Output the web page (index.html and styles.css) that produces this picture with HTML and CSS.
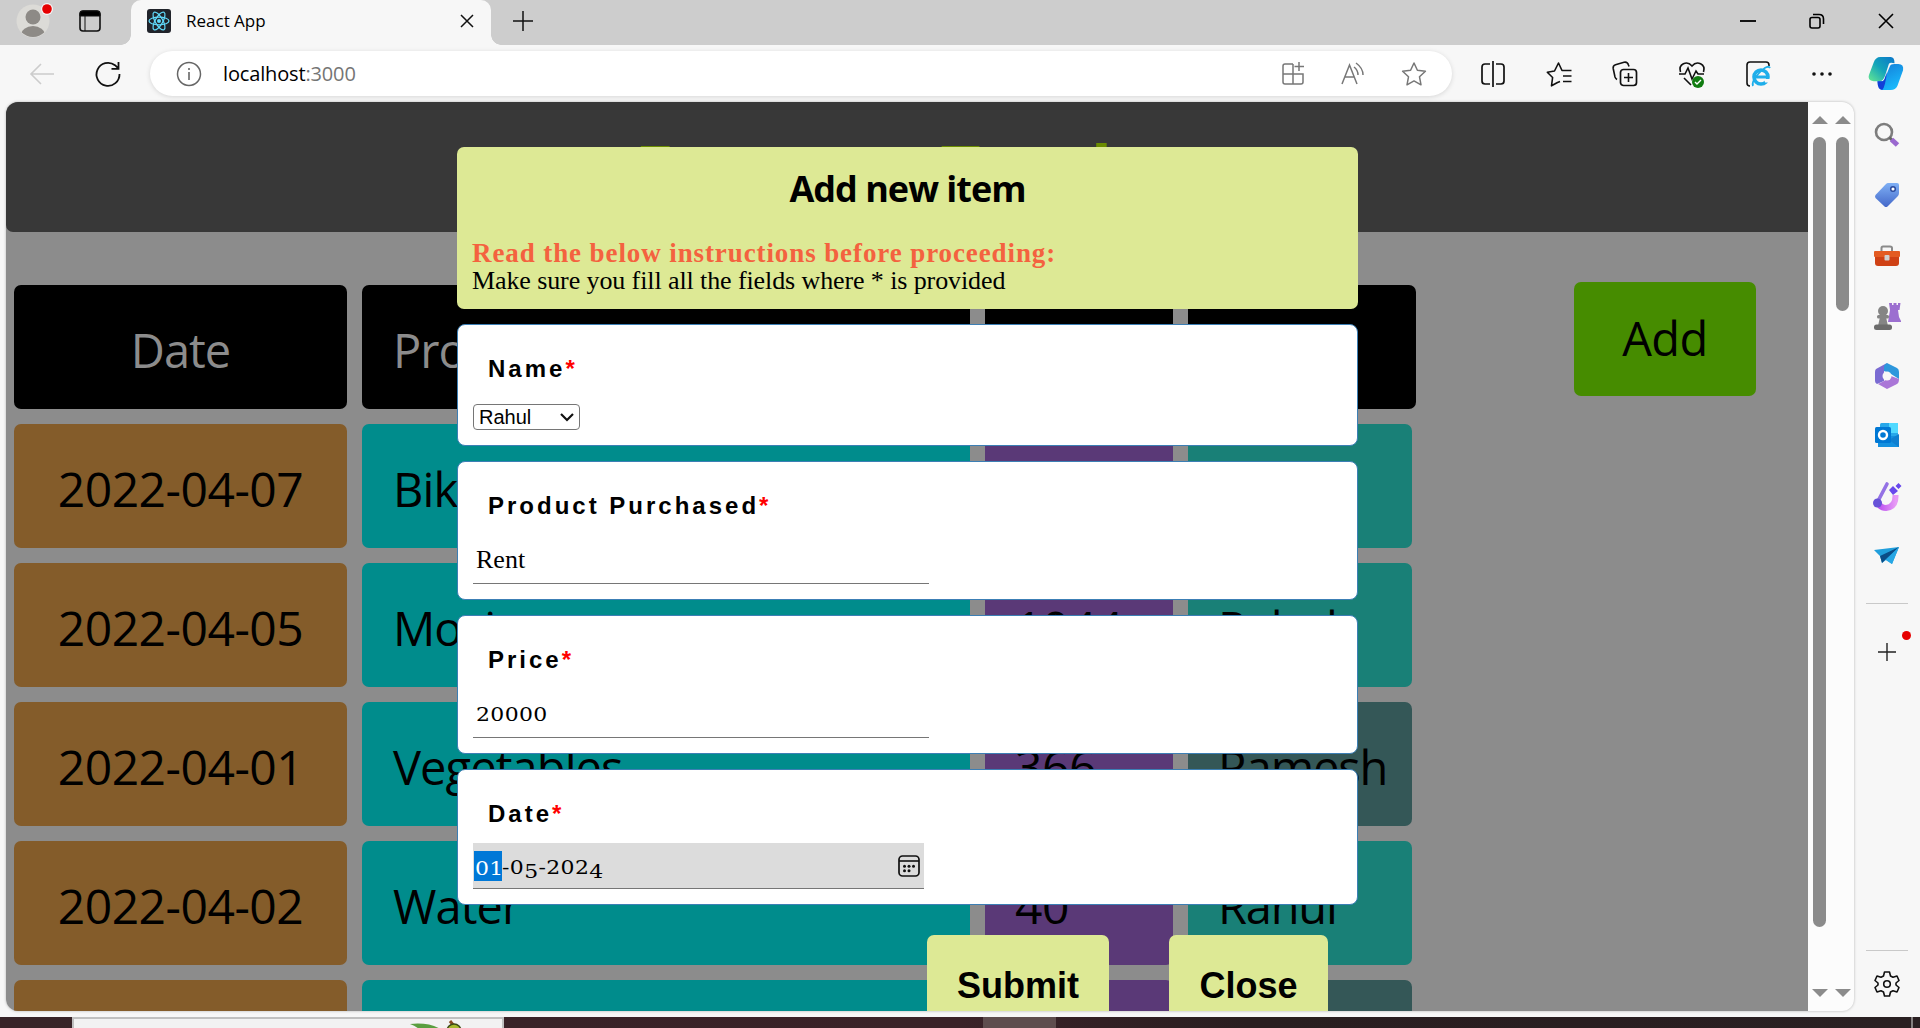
FILE: index.html
```html
<!DOCTYPE html>
<html lang="en">
<head>
<meta charset="utf-8">
<title>React App</title>
<link rel="stylesheet" href="styles.css">
</head>
<body>
<div class="window">
  <div class="tabstrip">
    <svg class="avatar" width="42" height="45" viewBox="0 0 42 45"><defs><clipPath id="av"><circle cx="17" cy="21" r="16"/></clipPath></defs><circle cx="17" cy="21" r="16.5" fill="#dcdbd7"/><g fill="#8d8a86" clip-path="url(#av)"><circle cx="17" cy="17" r="7.5"/><ellipse cx="17" cy="35" rx="12" ry="9"/></g><circle cx="31" cy="9" r="6" fill="#f7f7f7"/><circle cx="31" cy="9" r="4.8" fill="#e60000"/></svg>
    <svg class="tabsicon" width="22" height="22" viewBox="0 0 22 22"><rect x="1" y="1" width="20" height="20" rx="3" fill="none" stroke="#111" stroke-width="1.6"/><path d="M1 6V3.500Q1 1 4 1H18Q21 1 21 4V6ZM6 6V21" stroke="#111"/></svg>
    <div class="tab">
      <svg width="24" height="24" viewBox="0 0 24 24"><rect width="24" height="24" rx="3" fill="#20232a"/><g fill="none" stroke="#61dafb" stroke-width="1.2"><ellipse cx="12" cy="12" rx="10" ry="3.800"/><ellipse cx="12" cy="12" rx="10" ry="3.800" transform="rotate(60 12 12)"/><ellipse cx="12" cy="12" rx="10" ry="3.800" transform="rotate(120 12 12)"/></g><circle cx="12" cy="12" r="2" fill="#61dafb"/></svg>
      <span class="tabtitle">React App</span>
      <svg class="tabclose" width="14" height="14" viewBox="0 0 14 14"><path d="M1 1 13 13M13 1 1 13" stroke="#111" stroke-width="1.5"/></svg>
    </div>
    <svg class="newtab" width="22" height="22" viewBox="0 0 22 22"><path d="M11 1V21M1 11H21" stroke="#111" stroke-width="1.5"/></svg>
    <div class="controls">
      <svg width="16" height="16" viewBox="0 0 16 16"><path d="M0 8H16" stroke="#000" stroke-width="1.800"/></svg>
      <svg width="16" height="16" viewBox="0 0 16 16"><g fill="none" stroke="#000" stroke-width="1.600"><rect x="1" y="4.500" width="10" height="10.500" rx="2"/><path d="M4 1.500H10Q14.500 1.500 14.500 6V11"/></g></svg>
      <svg width="16" height="16" viewBox="0 0 16 16"><path d="M1 1 15 15M15 1 1 15" stroke="#000" stroke-width="1.600"/></svg>
    </div>
  </div>
  <div class="toolbar">
    <svg class="back" width="26" height="24" viewBox="0 0 26 24"><path d="M25 12H2M12 2 2 12 12 22" fill="none" stroke="#ccc" stroke-width="1.600"/></svg>
    <svg class="reload" width="26" height="26" viewBox="0 0 26 26"><path d="M24.500 13A11.500 11.500 0 1 1 20 4.200L23.500 7.500M23.500 1V7.800H16.500" fill="none" stroke="#111" stroke-width="1.800"/></svg>
    <div class="address">
      <svg width="26" height="26" viewBox="0 0 26 26"><circle cx="13" cy="13" r="11.500" fill="none" stroke="#666" stroke-width="1.500"/><path d="M13 11V19M13 7V9" stroke="#666" stroke-width="1.600"/></svg>
      <span class="url">localhost<span class="port">:3000</span></span>
      <div class="addressicons">
        <svg width="24" height="24" viewBox="0 0 24 24"><path d="M12 2H4Q2 2 2 4V20Q2 22 4 22H20Q22 22 22 20V12H2M12 2V22M18 0V9M13.500 4.500H23" fill="none" stroke="#777" stroke-width="1.500"/></svg>
        <svg width="24" height="24" viewBox="0 0 24 24"><path d="M1 22 8.500 3 16 22M4 15H13M13 5Q17 8 17 13M15 1Q22 6 22 13" fill="none" stroke="#777" stroke-width="1.500"/></svg>
        <svg width="26" height="26" viewBox="0 0 26 26"><path d="m13 2 3.400 7.300 8 1-5.900 5.500 1.500 8L13 19.900 6 23.800l1.500-8L1.600 10.300l8-1Z" fill="none" stroke="#777" stroke-width="1.500" stroke-linejoin="round"/></svg>
      </div>
    </div>
    <div class="actions">
      <svg width="26" height="26" viewBox="0 0 26 26"><path d="M10 3H5Q2 3 2 6V20Q2 23 5 23H10M16 3H21Q24 3 24 6V20Q24 23 21 23H16M13 0V26" fill="none" stroke="#111" stroke-width="1.700"/></svg>
      <svg width="26" height="26" viewBox="0 0 26 26"><path d="M14 20.500 11.500 21.500 5.500 24.800 6.600 16.500 1.300 11.200 8.500 10 12.500 2 16 9.500H25.500M17 15H25.500M17 20.500H25.500" fill="none" stroke="#111" stroke-width="1.600" stroke-linejoin="round"/></svg>
      <svg width="26" height="26" viewBox="0 0 26 26"><path d="M5 18.500Q3.500 17.500 3 16L1.200 7.500Q.700 4.500 3.500 3.700L12 1.200Q15.500 .500 16.500 4L17 5.500" fill="none" stroke="#111" stroke-width="1.600"/><rect x="8.500" y="8.500" width="16" height="16" rx="3" fill="none" stroke="#111" stroke-width="1.700"/><path d="M16.500 12V21M12 16.500H21" stroke="#111" stroke-width="1.600"/></svg>
      <svg width="28" height="28" viewBox="0 0 28 28"><path d="M2.500 12C0 4 9 0 14 6C19 0 28 4 25.500 12M6 18 13 25M1 14H7L10 8 14 19 18 11 20 14H26" fill="none" stroke="#111" stroke-width="1.600"/><circle cx="20" cy="22" r="6" fill="#107c10"/><path d="m17 22 2 2 4-4" fill="none" stroke="#fff" stroke-width="1.400"/></svg>
      <svg width="26" height="26" viewBox="0 0 26 26"><path d="M4 25Q1 25 1 22V4Q1 1 4 1H20Q23 1 23 4V5" fill="none" stroke="#111" stroke-width="1.600"/><circle cx="15" cy="16" r="7" fill="none" stroke="#1eaeea" stroke-width="3.600"/><path d="M8 16H22" stroke="#1eaeea" stroke-width="3"/><path d="M18 18H25V21.500H19Z" fill="#f7f7f7"/><path d="M7 25Q5 21 13 12 22 3 24 7" fill="none" stroke="#1eaeea" stroke-width="1.800"/></svg>
      <svg width="20" height="26" viewBox="0 0 20 26"><g fill="#111"><circle cx="2" cy="13" r="1.800"/><circle cx="10" cy="13" r="1.800"/><circle cx="18" cy="13" r="1.800"/></g></svg>
    </div>
    <svg class="copilot" width="36" height="33" viewBox="0 0 38 42" preserveAspectRatio="none"><defs><linearGradient id="c1" x1="1" y1="0" x2="0" y2="1"><stop stop-color="#0b75cb"/><stop offset=".5" stop-color="#12a4ba"/><stop offset="1" stop-color="#67e991"/></linearGradient><linearGradient id="c2" x2=".5" y2="1"><stop stop-color="#147ad6"/><stop offset="1" stop-color="#19b8fb"/></linearGradient></defs><path d="M24 0H13Q8 0 6 7L1 23Q-1 30 6 31H12Q16 31 18 24L22 9Q23 6 28 8 28 0 24 0Z" fill="url(#c1)"/><path d="M10 31H14Q17 31 18.500 25L23 12Q24 9 28 9H32Q38 9 37 17L31 37Q29 42 24 42H15Q11 42 10 31Z" fill="url(#c2)"/><path d="m10 31 4 0q3 0 4-5l2-7q-2 20-5 23-5 0-5-11" fill="#123fd7"/></svg>
  </div>
  <div class="main">
    <div class="viewport">
      <div class="page">
        <div class="banner"><h1 class="brand">Expense Tracker</h1></div>
        <div class="content">
          <div class="table">
            <div class="row head"><div class="cell c-date">Date</div><div class="cell c-prod">Product</div><div class="cell c-price">Price</div><div class="cell c-name">Name</div></div>
            <div class="row"><div class="cell c-date">2022-04-07</div><div class="cell c-prod">Bike</div><div class="cell c-price"></div><div class="cell c-name"></div></div>
            <div class="row"><div class="cell c-date">2022-04-05</div><div class="cell c-prod">Movies</div><div class="cell c-price">1044</div><div class="cell c-name">Rahul</div></div>
            <div class="row"><div class="cell c-date">2022-04-01</div><div class="cell c-prod">Vegetables</div><div class="cell c-price">366</div><div class="cell c-name alt">Ramesh</div></div>
            <div class="row"><div class="cell c-date">2022-04-02</div><div class="cell c-prod">Water</div><div class="cell c-price">40</div><div class="cell c-name">Rahul</div></div>
            <div class="row"><div class="cell c-date"></div><div class="cell c-prod"></div><div class="cell c-price"></div><div class="cell c-name alt"></div></div>
          </div>
          <div class="add">Add</div>
        </div>
        <div class="modal">
          <div class="intro">
            <h2 class="title">Add new item</h2>
            <div class="warn">Read the below instructions before proceeding:</div>
            <div class="note">Make sure you fill all the fields where * is provided</div>
          </div>
          <div class="card namecard"><div class="label">Name<span class="star">*</span></div>
            <div class="select"><span>Rahul</span><svg width="14" height="9" viewBox="0 0 14 9"><path d="m1 1 6 6 6-6" fill="none" stroke="#111" stroke-width="2.200"/></svg></div></div>
          <div class="card"><div class="label">Product Purchased<span class="star">*</span></div><div class="input">Rent</div></div>
          <div class="card"><div class="label">Price<span class="star">*</span></div><div class="input num"><span class="wide">20000</span></div></div>
          <div class="card datecard"><div class="label">Date<span class="star">*</span></div>
            <div class="input num dateinput"><span class="sel"><span class="wide">01</span></span><span class="wide rest">-0<span class="low">5</span>-202<span class="low">4</span></span><svg class="cal" width="22" height="22" viewBox="0 0 22 22"><rect x="1" y="1" width="20" height="20" rx="3.500" fill="none" stroke="#111" stroke-width="1.700"/><path d="M1 6H21" stroke="#111" stroke-width="1.600"/><g fill="#111"><circle cx="6.500" cy="11.200" r="1.500"/><circle cx="11" cy="11.200" r="1.500"/><circle cx="15.500" cy="11.200" r="1.500"/><circle cx="6.500" cy="15.800" r="1.500"/><circle cx="11" cy="15.800" r="1.500"/></g></svg></div></div>
          <div class="buttons"><div class="btn submit">Submit</div><div class="btn close">Close</div></div>
        </div>
      </div>
      <div class="scroll"><i class="up"></i><b class="thumb long"></b><i class="down"></i></div>
      <div class="scroll"><i class="up"></i><b class="thumb"></b><i class="down"></i></div>
    </div>
    <div class="sidebar">
      <svg width="28" height="28" viewBox="0 0 28 28"><circle cx="11" cy="11" r="8" fill="none" stroke="#7d7d7d" stroke-width="2.600"/><path d="m16.500 16.500 3 3" stroke="#666" stroke-width="3"/><path d="m18.500 18.500 6 5.500" stroke="#9a68cf" stroke-width="5"/></svg>
      <svg width="28" height="28" viewBox="0 0 28 28"><defs><linearGradient id="tg" x2="0" y2="1"><stop stop-color="#7fb0f5"/><stop offset="1" stop-color="#4468c9"/></linearGradient></defs><path d="M15 2H24Q26 2 26 4V12Q26 14 24.500 15.500L14.500 25.500Q13 26.500 11.500 25.500L2.500 17Q1.500 15.500 2.500 14L13 3Q14 2 15 2Z" fill="url(#tg)"/><circle cx="20" cy="8" r="2.300" fill="#fff" stroke="#2b4a9c" stroke-width="1.500"/></svg>
      <svg width="28" height="28" viewBox="0 0 28 28"><path d="M8.500 9V6Q8.500 4.500 10 4.500H17Q19 4.500 19 6V9" fill="none" stroke="#8a8a8a" stroke-width="2"/><path d="M2 13H26V21Q26 24 23 24H5Q2 24 2 21Z" fill="#cf4115"/><rect x="1" y="9" width="26" height="6" rx="1" fill="#e35b22"/><rect x="11.500" y="13" width="5" height="5.500" rx="1" fill="#d0d0d0"/></svg>
      <svg width="28" height="28" viewBox="0 0 28 28"><path d="M16 1H19V3H20.500V1H23.500V3H25V1H27.500L26.500 8H25L26 15 28 19V20H15L17 8Z" fill="#9c6fd0"/><g fill="#858585"><circle cx="10" cy="9" r="5"/><rect x="4" y="13" width="12" height="3.500" rx="1.500"/><path d="M7 15H13L15 24H5Z"/><rect x="1" y="22.500" width="18" height="5.500" rx="2.500" fill="#6c6c6c"/></g></svg>
      <svg width="28" height="28" viewBox="0 0 28 28"><path d="M14 1 3 7Q2 8 2 10V19Q2 21 4 22L11 19V6Z" fill="#7a6bd2"/><path d="M14 1 24 6Q26 7 26 10V17L18 12 11 9V4Q12 2 14 1Z" fill="#2d97dc"/><path d="M26 17Q26 21 24 22L14 27 5 22 11 19 18 14Z" fill="#aa76d7"/><circle cx="14" cy="14" r="4.500" fill="#f7f7f7"/></svg>
      <svg width="28" height="28" viewBox="0 0 28 28"><rect x="7" y="1" width="18" height="17" rx="1.500" fill="#28a8ea"/><path d="M16 1H25V11H16Z" fill="#50d9ff"/><path d="M5 14H26V25H5Z" fill="#1490df"/><path d="M26 12V25L16 18Z" fill="#0f7fd0"/><rect x="2" y="5" width="16" height="16" rx="1.500" fill="#0078d4"/><circle cx="10" cy="13" r="4" fill="none" stroke="#fff" stroke-width="2.400"/></svg>
      <svg class="magic" width="28" height="28" viewBox="0 0 28 28"><defs><linearGradient id="mg" x2="1"><stop stop-color="#b94df0"/><stop offset="1" stop-color="#e79af5"/></linearGradient></defs><path d="M5 19Q7 25 13 25 23 24 22.500 12" fill="none" stroke="url(#mg)" stroke-width="6"/><path d="M14 1 5 18" stroke="#9472e5" stroke-width="3.600" stroke-linecap="round"/><circle cx="4.500" cy="20" r="4.500" fill="#6752d8"/><path d="m20 3 5 5-5 4-4-5ZM25.500 0l3 3-3 3-3-3Z" fill="#6848ec"/></svg>
      <svg width="28" height="28" viewBox="0 0 28 28"><path d="M1 7 26 4 19 21 13 17 9 20 7 13Z" fill="#219fdc"/><path d="M26 4 7 13 9 20 13 16Z" fill="#0b4c86"/><path d="m26 4-13 13 6 4Z" fill="#27a7e5"/></svg>
      <div class="rule"></div>
      <div class="plus"><svg width="20" height="20" viewBox="0 0 20 20"><path d="M10 1V19M1 10H19" stroke="#222" stroke-width="1.400"/></svg><i class="dot"></i></div>
      <div class="rule bottom"></div>
      <svg class="gear" width="26" height="28" viewBox="0 0 26 28"><path d="M10.500 2H15.500L16.500 6 19 7.300 23 6 25 10.500 22 13V15L25 17.500 23 22 19 20.700 16.500 22 15.500 26H10.500L9.500 22 7 20.700 3 22 1 17.500 4 15V13L1 10.500 3 6 7 7.300 9.500 6Z" fill="none" stroke="#111" stroke-width="1.600" stroke-linejoin="round"/><circle cx="13" cy="14" r="3.300" fill="none" stroke="#111" stroke-width="1.600"/></svg>
    </div>
  </div>
  <div class="taskbar">
    <div class="search"><svg width="60" height="11" viewBox="0 0 60 11"><path d="M4 5Q24 3 36 11H14Q10 7 4 5Z" fill="#5a9e3f"/><path d="M44 2 48 7" stroke="#8a4b22" stroke-width="3"/><circle cx="48" cy="12" r="7" fill="#a7b82c" stroke="#3c4a16" stroke-width="1.500"/></svg></div>
    <div class="active"></div>
    <div class="clock">10:35 AM</div>
    <div class="peek"></div>
  </div>
</div>
</body>
</html>
```
FILE: styles.css
```css
* { box-sizing: border-box; }
body { margin: 0; font-family: "Open Sans", "Noto Sans", sans-serif; color: #000; }
svg { display: block; flex: none; overflow: visible; }
.window { width: 1920px; height: 1028px; overflow: hidden; background: #f7f7f7; display: flex; flex-direction: column; }
.tabstrip { height: 45px; background: #cdcdcd; display: flex; align-items: center; flex: none; padding-left: 16px; }
.tabsicon { margin: 0 0 3px 21px; }
.tab { margin-left: 30px; width: 360px; height: 45px; background: #f7f7f7; border-radius: 10px 10px 0 0; display: flex; align-items: center; padding: 0 17px 3px 16px; position: relative; }
.tab::before, .tab::after { content: ""; position: absolute; bottom: 0; width: 10px; height: 10px; }
.tab::before { left: -10px; background: radial-gradient(circle at 0 0, #cdcdcd 9.5px, #f7f7f7 10px); }
.tab::after { right: -10px; background: radial-gradient(circle at 100% 0, #cdcdcd 9.5px, #f7f7f7 10px); }
.tabtitle { margin: -2px 0 0 15px; font-size: 17px; }
.tabclose { margin-left: auto; }
.newtab { margin-left: 21px; margin-bottom: 4px; }
.controls { margin-left: auto; display: flex; gap: 53px; margin-right: 26px; margin-bottom: 4px; }
.toolbar { height: 57px; flex: none; display: flex; align-items: center; padding-left: 29px; }
.reload { margin-left: 40px; }
.address { margin-left: 29px; width: 1302px; height: 45px; border-radius: 23px; background: #fff; box-shadow: 0 1px 5px #0002; display: flex; align-items: center; padding: 0 25px 0 26px; }
.url { margin-left: 21px; font-size: 20px; letter-spacing: -.15px; }
.port { color: #757575; }
.addressicons { margin-left: auto; display: flex; align-items: center; gap: 36px; }
.actions { margin-left: 28px; display: flex; align-items: center; gap: 40px; }
.copilot { margin-left: 36px; }
.main { height: 915px; flex: none; display: flex; padding-left: 6px; }
.viewport { width: 1848px; height: 909px; display: flex; border-radius: 12px; overflow: hidden; background: #fcfcfc; box-shadow: 0 0 3px #0004; flex: none; }
.page { width: 1802px; height: 909px; overflow: hidden; background: #8c8c8c; position: relative; flex: none; }
.banner { height: 130px; background: #383838; border-radius: 0 0 0 7px; padding: 32px 0 0 28px; }
.brand { margin: 0; text-align: center; font-size: 70px; line-height: 70px; font-weight: 700; color: #6b8c00; }
.content { display: flex; padding: 53px 0 0 8px; align-items: flex-start; }
.table { display: flex; flex-direction: column; gap: 15px; width: 1402px; }
.row { display: flex; gap: 15px; height: 124px; }
.cell { border-radius: 7px; font-size: 48px; line-height: 130px; padding-left: 31px; white-space: nowrap; letter-spacing: -.5px; height: 124px; }
.c-date { width: 333px; background: #845c2a; padding: 0; text-align: center; }
.c-prod { width: 608px; background: #008c8c; font-size: 47px; letter-spacing: -.9px; }
.c-price { width: 188px; background: #5a3977; padding-left: 30px; }
.c-name { width: 224px; background: #198077; font-size: 47px; letter-spacing: -1.2px; padding-left: 30px; }
.c-name.alt { background: #345757; }
.head .cell { background: #000; color: #8c8c8c; font-size: 47px; letter-spacing: -1px; }
.head .c-name { width: 228px; }
.add { margin: -3px 0 0 158px; width: 182px; height: 114px; border-radius: 7px; background: #468c00; text-align: center; font-size: 47px; line-height: 113px; letter-spacing: -.5px; }
.modal { position: absolute; left: 451px; top: 45px; width: 901px; display: flex; flex-direction: column; }
.intro { height: 162px; border-radius: 7px; background: #dde995; padding: 15px 15px 0; }
.title { margin: 0; text-align: center; font-size: 36px; line-height: 54px; font-weight: 700; letter-spacing: -1px; }
.warn, .note { font-family: "Liberation Serif", serif; font-size: 26px; line-height: 27px; white-space: nowrap; }
.warn { margin-top: 24px; color: #f4623f; font-weight: 700; letter-spacing: .9px; font-size: 27px; }
.note { letter-spacing: -.1px; }
.card { margin-top: 15px; height: 139px; background: #fff; border: 1px solid #3c7fb5; border-radius: 8px; padding: 29px 15px 0; }
.namecard { height: 122px; }
.datecard { height: 136px; }
.label { padding-left: 15px; font: 700 24px/30px "Liberation Sans", sans-serif; letter-spacing: 3px; }
.star { color: #f00; letter-spacing: 0; }
.select { margin-top: 20px; width: 107px; height: 26px; border: 1px solid #767676; border-radius: 4px; padding: 0 5px; display: flex; align-items: center; justify-content: space-between; font: 20px/24px "Liberation Sans", sans-serif; }
.input { margin-top: 16px; width: 456px; height: 47px; border-bottom: 1px solid #767676; padding: 0 3px; font: 26px/46px "Liberation Serif", serif; }
.num { font: 18px/48px "DejaVu Serif", serif; }
.wide { display: inline-block; transform: scaleX(1.22); transform-origin: 0 50%; letter-spacing: .3px; }
.dateinput { margin-top: 14px; width: 451px; height: 46px; background: #dcdcdc; display: flex; align-items: center; padding: 0 4px 0 1px; }
.sel { background: #0078d7; color: #fff; height: 30px; line-height: 36px; width: 28px; padding-left: 1px; }
.rest { line-height: 30px; padding-top: 5px; }
.low { vertical-align: -4px; line-height: 1; }
.cal { margin-left: auto; }
.buttons { display: flex; margin: 30px 0 0 470px; gap: 60px; }
.btn { height: 102px; border-radius: 7px; background: #dde995; font: 700 36px/101px "Liberation Sans", sans-serif; text-align: center; }
.submit { width: 182px; }
.close { width: 159px; }
.scroll { width: 23px; height: 909px; display: flex; flex-direction: column; align-items: center; padding: 14px 0 14px; }
.up, .down { border: 8px solid transparent; border-top: 0; border-bottom: 8px solid #8b8b8b; }
.down { margin-top: auto; border-bottom: 0; border-top: 8px solid #8b8b8b; }
.thumb { margin-top: 13px; width: 13px; height: 174px; border-radius: 7px; background: #8b8b8b; }
.thumb.long { height: 790px; }
.sidebar { width: 66px; display: flex; flex-direction: column; align-items: center; padding-top: 19px; gap: 32.300px; }
.rule { width: 42px; height: 1px; background: #c9c9c9; flex: none; }
.plus { position: relative; margin-top: 5px; }
.dot { position: absolute; left: 25px; top: -11px; width: 9px; height: 9px; border-radius: 50%; background: #e60000; }
.rule.bottom { margin-top: auto; }
.gear { margin: -13px 0 19px; }
.taskbar { height: 11px; flex: none; background: linear-gradient(90deg, #382428, #3a2228 50%, #291e20 65%, #2a2022); display: flex; overflow: hidden; position: relative; }
.search { margin-left: 72px; width: 432px; height: 11px; background: #f2f2f2; border: 2px solid #c0c0c0; border-bottom: 0; padding-left: 332px; }
.active { margin-left: 479px; width: 73px; background: #5e4d4e; }
.clock { margin: 5px 0 0 auto; color: #fff; font-size: 15px; line-height: 20px; }
.peek { width: 2px; margin: 0 7px 0 149px; background: #858080; }
```
